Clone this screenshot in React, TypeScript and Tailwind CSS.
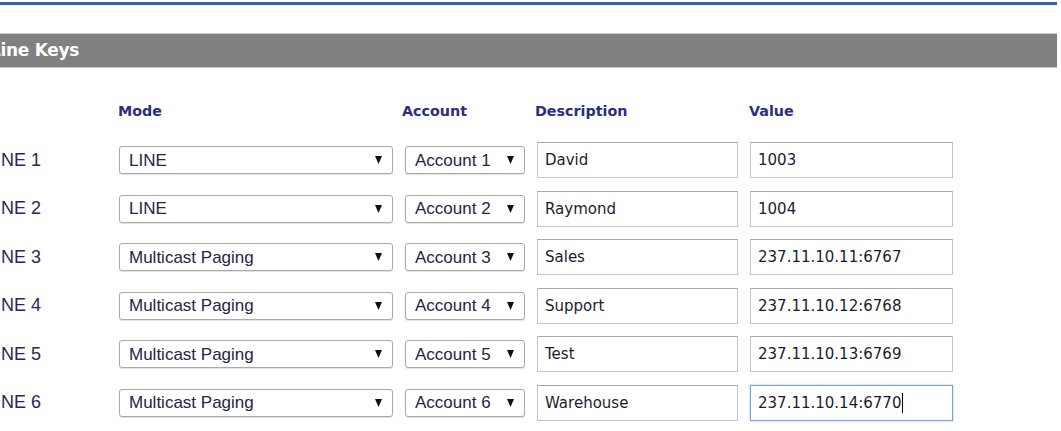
import React from "react";

interface LineKey {
  label: string;
  mode: string;
  account: string;
  description: string;
  value: string;
}

const keys: LineKey[] = [
  { label: "LINE 1", mode: "LINE", account: "Account 1", description: "David", value: "1003" },
  { label: "LINE 2", mode: "LINE", account: "Account 2", description: "Raymond", value: "1004" },
  { label: "LINE 3", mode: "Multicast Paging", account: "Account 3", description: "Sales", value: "237.11.10.11:6767" },
  { label: "LINE 4", mode: "Multicast Paging", account: "Account 4", description: "Support", value: "237.11.10.12:6768" },
  { label: "LINE 5", mode: "Multicast Paging", account: "Account 5", description: "Test", value: "237.11.10.13:6769" },
  { label: "LINE 6", mode: "Multicast Paging", account: "Account 6", description: "Warehouse", value: "237.11.10.14:6770" },
];

const arrow = (
  <svg width="7" height="8" viewBox="0 0 7 8" className="shrink-0">
    <polygon points="0,0 7,0 3.5,8" fill="#111" />
  </svg>
);

function Select({ text, width }: { text: string; width: string }) {
  return (
    <div
      className={`${width} h-[28px] flex items-center justify-between pl-[9px] pr-[10px] bg-white border border-[#a9a9a9] rounded-[3px] shadow-[0_1px_1px_rgba(0,0,0,0.12)] text-[17px] text-[#262448] font-['Liberation_Sans',Arial,sans-serif]`}
    >
      <span>{text}</span>
      {arrow}
    </div>
  );
}

function TextBox({ text, width, focused }: { text: string; width: string; focused?: boolean }) {
  return (
    <div
      className={`${width} h-[36px] flex items-center px-[7px] bg-white border text-[15px] text-[#1c1c2c] font-['DejaVu_Sans',Verdana,sans-serif] ${
        focused ? "border-[#7aa3dc] shadow-[0_0_2px_#9bbbe8]" : "border-[#c4c4c4] border-t-[#a8a8a8]"
      }`}
    >
      <span>{text}</span>
      {focused && <span className="inline-block w-px h-[20px] bg-black ml-px" />}
    </div>
  );
}

export default function App() {
  return (
    <div className="w-[1061px] h-[431px] overflow-hidden bg-white">
      {/* heading rule */}
      <div className="mt-[2px] w-[1057px] h-[3px] bg-[#3d61a3] shadow-[0_0_1px_#9fb3d6]" />

      {/* section bar */}
      <div className="mt-[28px] w-[1067px] h-[35px] bg-[#808080] border-y border-[#c8c8c8] flex items-center -ml-[10px]">
        <span className="text-white font-bold text-[17px] font-['DejaVu_Sans',Verdana,sans-serif] tracking-[-0.3px]">
          Line Keys
        </span>
      </div>

      <div className="-ml-[14px]">
        {/* column headers */}
        <div className="mt-[34px] mb-[14px] h-[20px] flex items-center gap-[12px] text-[14.3px] font-bold text-[#2b2d80] font-['DejaVu_Sans',Verdana,sans-serif]">
          <div className="w-[121px]" />
          <div className="w-[274px] -ml-[1px]">Mode</div>
          <div className="w-[120px] -ml-[2px]">Account</div>
          <div className="w-[201px] ml-[1px]">Description</div>
          <div className="w-[203px] ml-[1px]">Value</div>
        </div>

        {keys.map((k, i) => (
          <div key={k.label} className="h-[48.5px] flex items-center gap-[12px]">
            <div className="w-[121px] text-[18px] text-[#2a2856] font-['Liberation_Sans',Arial,sans-serif]">
              {k.label}
            </div>
            <Select text={k.mode} width="w-[274px]" />
            <Select text={k.account} width="w-[120px]" />
            <TextBox text={k.description} width="w-[201px]" />
            <TextBox text={k.value} width="w-[203px]" focused={i === keys.length - 1} />
          </div>
        ))}
      </div>
    </div>
  );
}
